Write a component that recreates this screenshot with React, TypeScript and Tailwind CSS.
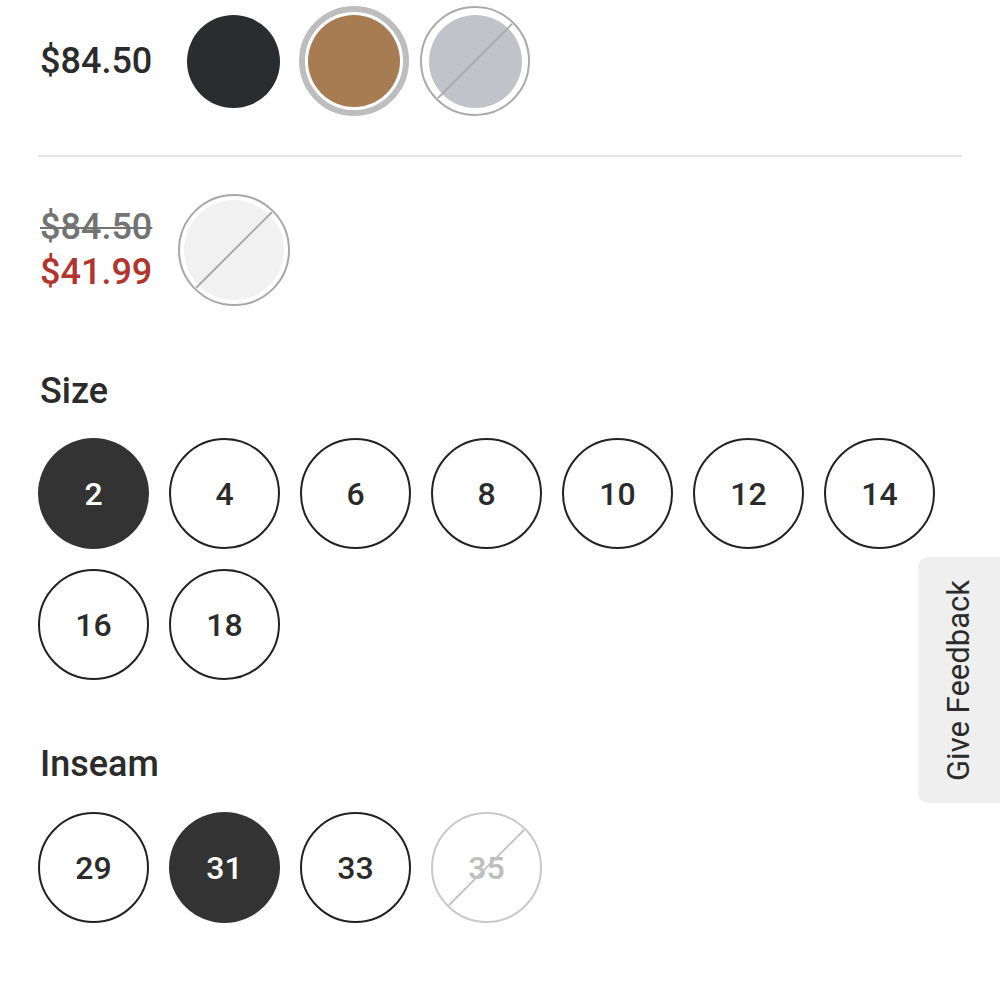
import React from 'react';

const sizes = ['2', '4', '6', '8', '10', '12', '14', '16', '18'];
const inseams = [
  { label: '29', state: 'idle' },
  { label: '31', state: 'selected' },
  { label: '33', state: 'idle' },
  { label: '35', state: 'disabled' },
];

function Slash({ color }: { color: string }) {
  return (
    <svg className="absolute inset-0 w-full h-full pointer-events-none" viewBox="0 0 100 100">
      <line x1="15" y1="85" x2="85" y2="15" stroke={color} strokeWidth="1.8" />
    </svg>
  );
}

function OptionCircle({ label, state }: { label: string; state: string }) {
  const base =
    'relative w-[111px] h-[111px] rounded-full flex items-center justify-center text-[32px] font-medium';
  if (state === 'selected') {
    return <div className={`${base} bg-[#333333] text-white`}>{label}</div>;
  }
  if (state === 'disabled') {
    return (
      <div className={`${base} border-2 border-[#c9c9c9] text-[#bdbdbd]`}>
        {label}
        <Slash color="#c2c2c2" />
      </div>
    );
  }
  return <div className={`${base} border-2 border-[#222222] text-[#2b2b2b]`}>{label}</div>;
}

export default function App() {
  return (
    <div
      className="relative w-full h-[1000px] overflow-hidden bg-white px-[38px] text-[#2b2b2b]"
      style={{ fontFamily: 'Roboto, "Liberation Sans", sans-serif' }}
    >
      {/* Colour row, full price */}
      <div className="mt-[6px] h-[110px] flex items-center">
        <div className="w-[140px] pl-[2px] text-[36px] font-medium leading-[44px]">$84.50</div>
        <div className="flex gap-[11px]">
          <div className="w-[110px] h-[110px] flex items-center justify-center">
            <div className="w-[93px] h-[93px] rounded-full bg-[#2a2c2e]" />
          </div>
          <div className="w-[110px] h-[110px] rounded-full border-[6px] border-[#bdbdbd] flex items-center justify-center">
            <div className="w-[92px] h-[92px] rounded-full bg-[#a77c52]" />
          </div>
          <div className="relative w-[110px] h-[110px] rounded-full border-2 border-[#ababab] flex items-center justify-center">
            <div className="w-[93px] h-[93px] rounded-full bg-[#c2c3ca]" />
            <Slash color="#a9a9a9" />
          </div>
        </div>
      </div>

      <div className="mt-[39px] h-[2px] bg-[#e3e3e3]" />

      {/* Sale row */}
      <div className="mt-[37px] h-[112px] flex items-center">
        <div className="w-[140px] pl-[2px] text-[36px] font-medium leading-[45px] flex flex-col">
          <span className="text-[#737373] line-through decoration-2">$84.50</span>
          <span className="text-[#b3342f]">$41.99</span>
        </div>
        <div className="relative w-[112px] h-[112px] rounded-full border-2 border-[#a8a8a8] flex items-center justify-center">
          <div className="w-[100px] h-[100px] rounded-full bg-[#f1f1f1]" />
          <Slash color="#a8a8a8" />
        </div>
      </div>

      {/* Size */}
      <div className="mt-[63px] pl-[2px] text-[36px] font-medium leading-[44px]">Size</div>
      <div className="mt-[25px] flex flex-wrap gap-[20px]">
        {sizes.map((s, i) => (
          <OptionCircle key={s} label={s} state={i === 0 ? 'selected' : 'idle'} />
        ))}
      </div>

      {/* Inseam */}
      <div className="mt-[62px] pl-[2px] text-[36px] font-medium leading-[44px]">Inseam</div>
      <div className="mt-[26px] flex gap-[20px]">
        {inseams.map((s) => (
          <OptionCircle key={s.label} label={s.label} state={s.state} />
        ))}
      </div>

      {/* Feedback tab */}
      <div className="absolute right-0 top-[557px] w-[82px] h-[246px] bg-[#efefef] rounded-l-[10px] flex items-center justify-center">
        <span className="[writing-mode:vertical-rl] rotate-180 text-[31px] text-[#2b2b2b] whitespace-nowrap">
          Give Feedback
        </span>
      </div>
    </div>
  );
}
